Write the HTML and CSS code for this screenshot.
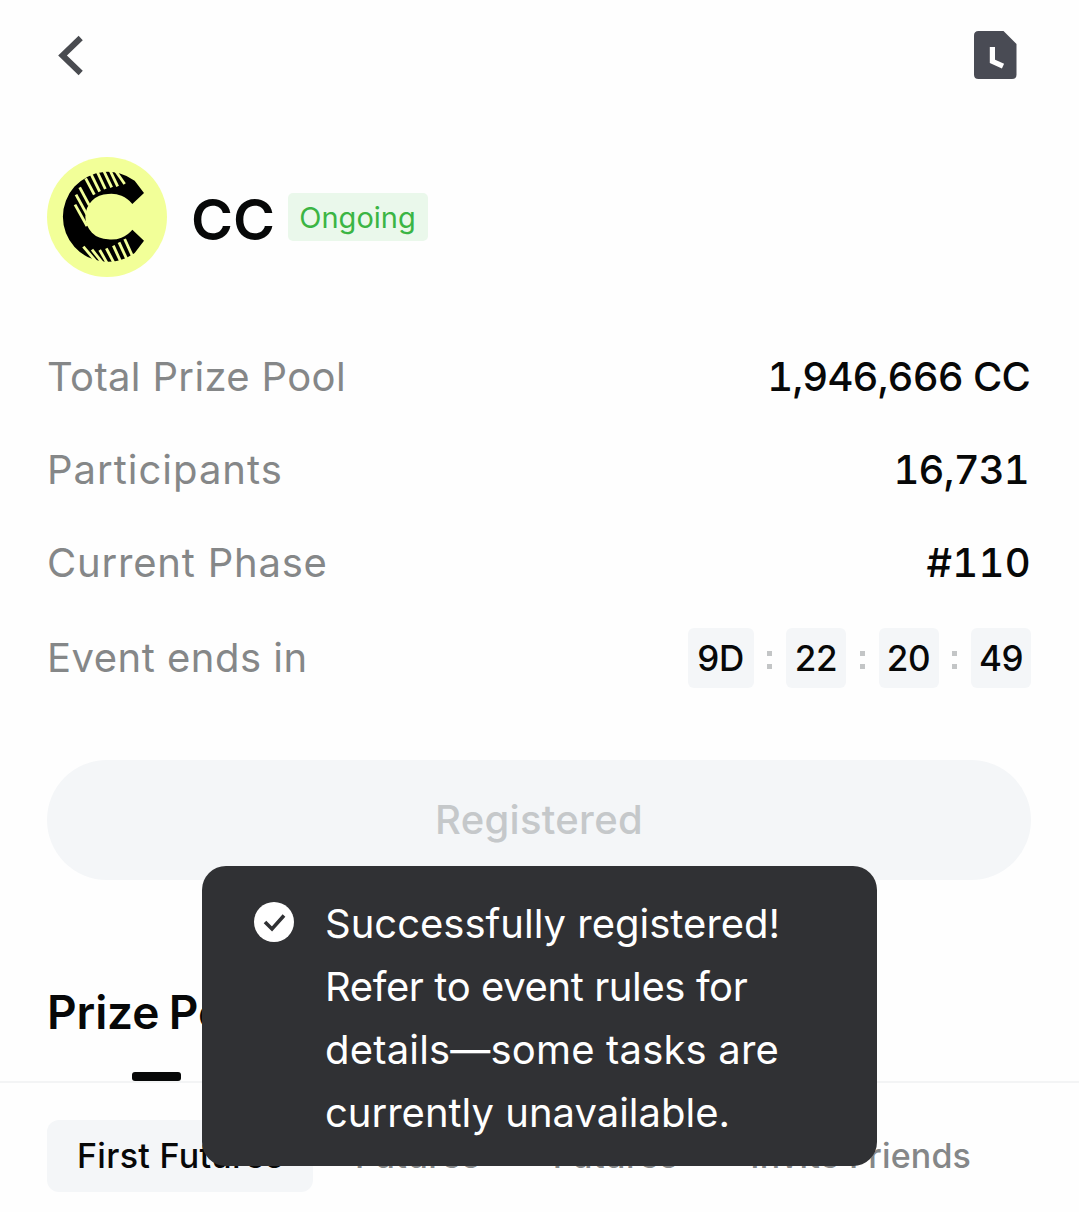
FILE: index.html
```html
<!DOCTYPE html>
<html lang="en">
<head>
  <meta charset="UTF-8" />
  <meta name="viewport" content="width=device-width, initial-scale=1.0"/>
  <title>CC Event</title>
  <link rel="stylesheet" href="styles.css">
</head>
<body>
  <header class="topbar">
    <svg class="icon-back" width="26" height="42" viewBox="0 0 26 42" fill="none" stroke="#494b50" stroke-width="6">
      <path d="M23.7 4 L5.5 21.5 L23.7 39" />
    </svg>
    <svg class="icon-history" width="43" height="48" viewBox="0 0 43 48">
      <path fill="#494b54" d="M4.5 0 H29.5 L42.5 13 V43.5 Q42.5 48 38 48 H4.5 Q0 48 0 43.5 V4.5 Q0 0 4.5 0 Z" />
      <path fill="none" stroke="#fff" stroke-width="5.2" d="M18.4 16 V30.3 L29 35.2" />
    </svg>
  </header>

  <div class="event">
    <svg class="logo" width="120" height="120" viewBox="7 21 360 360">
      <circle cx="187" cy="201" r="180" fill="#f2ff98" />
      <path d="M298 129 L270 92 A135 135 0 1 0 270 309 L298 272 L263 239 A80 80 0 0 1 190 268 A68 68 0 0 1 190 132 A80 80 0 0 1 263 162 Z" />
      <!-- hatching -->
      <g fill="none" stroke="#f2ff98" stroke-width="8.5">
        <path d="M91 164 L127 228" />
        <path d="M94 134 L127 194" />
        <path d="M105 112 L134 166" />
        <path d="M123 85 L149 134" />
        <path d="M140 74 L165 125" />
        <path d="M158 66 L182 117" />
        <path d="M176 60 L201 112" />
        <path d="M194 57 L219 109" />
        <path d="M209 57 L240 102" />
        <path d="M116 290 L158 339" />
        <path d="M142 299 L177 343" />
        <path d="M165 300 L190 344" />
        <path d="M185 295 L210 343" />
        <path d="M206 287 L230 339" />
        <path d="M223 277 L248 331" />
        <path d="M240 267 L265 322" />
      </g>
    </svg>
    <h1 class="event-name">CC</h1>
    <span class="badge">Ongoing</span>
  </div>

  <div class="info">
    <div class="row">
      <span class="label label-pool">Total Prize Pool</span>
      <span class="value">1,946,666 CC</span>
    </div>
    <div class="row">
      <span class="label label-people">Participants</span>
      <span class="value value-people">16,731</span>
    </div>
    <div class="row">
      <span class="label">Current Phase</span>
      <span class="value value-phase">#110</span>
    </div>
    <div class="row row-timer">
      <span class="label label-ends">Event ends in</span>
      <div class="timer">
        <span class="time time-day">9D</span><span class="colon"></span>
        <span class="time">22</span><span class="colon"></span>
        <span class="time">20</span><span class="colon"></span>
        <span class="time">49</span>
      </div>
    </div>
  </div>

  <button class="btn" disabled>Registered</button>

  <nav class="tabs">
    <div class="tab">Prize Pool</div>
  </nav>

  <div class="chips">
    <span class="chip active">First Futures</span>
    <span class="chip">Futures</span>
    <span class="chip">Futures</span>
    <span class="chip chip-invite">Invite Friends</span>
  </div>

  <div class="toast">
    <svg class="toast-icon" width="40" height="40" viewBox="0 0 40 40">
      <circle cx="20" cy="20" r="20" fill="#fff" />
      <path d="M11 20 L18 27 L30 13.5" fill="none" stroke="#303134" stroke-width="3.6" />
    </svg>
    <p class="toast-text">
      Successfully registered!<br>
      <span class="tight">Refer to event rules for</span><br>
      <span class="wide">details—some tasks are</span><br>
      currently unavailable.
    </p>
  </div>
</body>
</html>
```
FILE: styles.css
```css
* {
  box-sizing: border-box;
}

body {
  margin: 0;
  width: 1079px;
  height: 1212px;
  position: relative;
  overflow: hidden;
  background-color: #fefefe;
  color: #070808;
  font-family: Inter, "Liberation Sans", sans-serif;
}

.topbar {
  height: 110px;
  padding: 0 62px 0 57px;
  display: flex;
  align-items: center;
  justify-content: space-between;
}

.event {
  height: 120px;
  margin: 47px 47px 0;
  display: flex;
  align-items: center;
}

.event-name {
  margin: 6px 0 0 24px;
  font-size: 57px;
  font-weight: 600;
  line-height: 60px;
}

.badge {
  width: 140px;
  height: 48px;
  margin-left: 12.5px;
  border-radius: 5px;
  background-color: #eaf8eb;
  color: #3bb544;
  font-size: 29px;
  line-height: 50px;
  text-align: center;
}

.info {
  margin: 69px 48px 0 47px;
  display: flex;
  flex-direction: column;
  gap: 33px;
}

.row {
  height: 60px;
  display: flex;
  align-items: center;
  justify-content: space-between;
}

.row-timer {
  margin-top: 3px;
}

.label {
  color: #858788;
  font-size: 40px;
  letter-spacing: 0.8px;
}

.label-pool {
  letter-spacing: 0.35px;
}

.label-people {
  letter-spacing: 1px;
}

.label-ends {
  margin-top: -2px;
  letter-spacing: 0.5px;
}

.value {
  margin-right: 1px;
  font-size: 40px;
  font-weight: 500;
  font-variant-numeric: tabular-nums;
  letter-spacing: -0.8px;
}

.value-people {
  margin-right: 2px;
}

.value-phase {
  margin-right: 0;
  letter-spacing: 0.3px;
}

.timer {
  display: flex;
  align-items: center;
}

.time {
  width: 60px;
  height: 60px;
  border-radius: 6px;
  background-color: #f4f6f8;
  font-size: 35px;
  font-weight: 500;
  line-height: 60px;
  letter-spacing: -0.4px;
  text-align: center;
}

.time-day {
  width: 66px;
}

.colon {
  width: 5px;
  height: 18px;
  margin: 4px 14px 0 13.5px;
  border-top: 5px solid #c3c5c6;
  border-bottom: 5px solid #c3c5c6;
}

.btn {
  display: block;
  width: 984px;
  height: 120px;
  margin: 72px 0 0 47px;
  padding: 0 0 2px;
  border: none;
  border-radius: 60px;
  background-color: #f4f6f8;
  color: #c5c8ca;
  font-family: inherit;
  font-size: 40px;
  font-weight: 500;
  letter-spacing: 0.3px;
}

.tabs {
  height: 203px;
  padding-left: 47px;
  border-bottom: 2px solid #f3f4f5;
  display: flex;
  align-items: flex-end;
}

.tab {
  height: 97px;
  font-size: 46px;
  font-weight: 600;
  line-height: 56px;
  letter-spacing: -0.1px;
  word-spacing: -2px;
}

.tab::after {
  content: "";
  display: block;
  width: 49px;
  height: 9px;
  margin: 32px auto 0;
  border-radius: 3px;
  background-color: #070808;
}

.chips {
  margin: 37px 47px 0;
  display: flex;
}

.chip {
  height: 72px;
  margin-right: 12px;
  padding: 0 30px;
  border-radius: 12px;
  color: #858788;
  font-size: 34px;
  font-weight: 500;
  line-height: 72px;
  letter-spacing: 0.5px;
  white-space: nowrap;
}

.chip.active {
  width: 266px;
  background-color: #f4f6f8;
  color: #070808;
  letter-spacing: 0.3px;
}

.chip-invite {
  letter-spacing: 0.15px;
}

/* floats over the button and the tabs */
.toast {
  position: absolute;
  left: 202px;
  top: 866px;
  width: 675px;
  height: 300px;
  padding: 26px 0 0 52px;
  border-radius: 24px;
  background-color: #303134;
  color: #fff;
  display: flex;
  align-items: flex-start;
}

.toast-icon {
  margin-top: 10px;
}

.toast-text {
  margin: 0 0 0 31px;
  font-size: 40px;
  line-height: 63px;
  letter-spacing: 0;
  white-space: nowrap;
}

.tight {
  letter-spacing: -0.4px;
}

.wide {
  letter-spacing: 0.18px;
}
```
